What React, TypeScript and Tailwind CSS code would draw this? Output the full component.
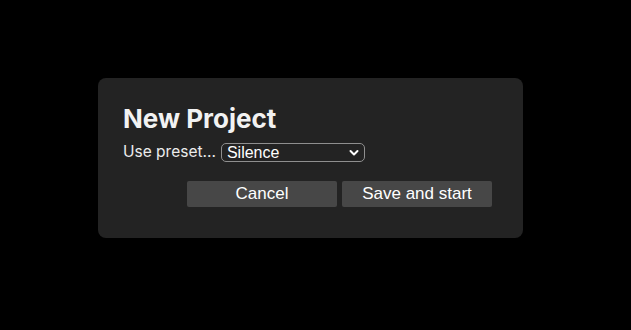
import React from "react";

export default function App() {
  return (
    <div className="w-[631px] h-[330px] bg-black pt-[78px] pl-[98px]">
      <div className="w-[425px] h-[160px] bg-[#232323] rounded-[8px] pt-[25px] pl-[25px] pr-[31px] flex flex-col">
        <h1
          className="text-[26px] leading-[32px] font-bold text-[#f2f2f2]"
          style={{ fontFamily: "Inter, 'Noto Sans', sans-serif" }}
        >
          New Project
        </h1>
        <div className="mt-[7px] flex items-center h-[20px]">
          <span
            className="text-[15.5px] leading-[20px] text-[#ececec]"
            style={{ fontFamily: "Inter, 'Noto Sans', sans-serif" }}
          >
            Use preset...
          </span>
          <div className="ml-[5px] relative w-[144px] h-[19px] border border-[#8f8f8f] rounded-[5px] bg-[#232323] flex items-center pl-[5px]">
            <span
              className="text-[16px] leading-[17px] text-white"
              style={{ fontFamily: "'Liberation Sans', Arial, sans-serif" }}
            >
              Silence
            </span>
            <svg
              className="absolute right-[5px] top-[5px]"
              width="10"
              height="8"
              viewBox="0 0 10 8"
              fill="none"
            >
              <path d="M1.5 2 L5 5.5 L8.5 2" stroke="white" strokeWidth="2" strokeLinecap="round" strokeLinejoin="round" />
            </svg>
          </div>
        </div>
        <div className="mt-[19px] flex justify-end gap-[5px]">
          <button
            className="w-[150px] h-[26px] bg-[#474747] rounded-[2px] text-white text-[17px] leading-[26px]"
            style={{ fontFamily: "'Liberation Sans', Arial, sans-serif" }}
          >
            Cancel
          </button>
          <button
            className="w-[150px] h-[26px] bg-[#474747] rounded-[2px] text-white text-[17px] leading-[26px]"
            style={{ fontFamily: "'Liberation Sans', Arial, sans-serif" }}
          >
            Save and start
          </button>
        </div>
      </div>
    </div>
  );
}
